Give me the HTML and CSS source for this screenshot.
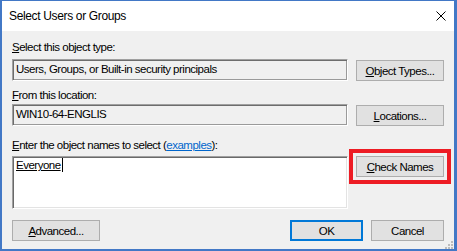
FILE: index.html
```html
<!DOCTYPE html>
<html>
<head>
<meta charset="utf-8">
<link rel="stylesheet" href="styles.css">
</head>
<body>
<div class="window">
  <div class="titlebar">
    <span class="title">Select Users or Groups</span>
    <svg class="close" width="10" height="10" viewBox="0 0 10 10"><path d="M0.5 0.5 L9.5 9.5 M9.5 0.5 L0.5 9.5" stroke="#000" stroke-width="1" fill="none"/></svg>
  </div>
  <div class="content">
    <div class="label"><u>S</u>elect this object type:</div>
    <div class="row row-type">
      <div class="field">Users, Groups, or Built-in security principals</div>
      <div class="btn btn-side"><u>O</u>bject Types...</div>
    </div>
    <div class="label label-loc"><u>F</u>rom this location:</div>
    <div class="row row-loc">
      <div class="field">WIN10-64-ENGLIS</div>
      <div class="btn btn-side"><u>L</u>ocations...</div>
    </div>
    <div class="label label-names"><u>E</u>nter the object names to select (<span class="link">examples</span>):</div>
    <div class="row row-names">
      <div class="textarea"><span class="name">Everyone</span></div>
      <div class="check-wrap">
        <div class="btn btn-check"><u>C</u>heck Names</div>
        <div class="highlight"></div>
      </div>
    </div>
    <div class="footer">
      <div class="btn btn-adv"><u>A</u>dvanced...</div>
      <div class="spacer"></div>
      <div class="btn btn-ok">OK</div>
      <div class="btn btn-cancel">Cancel</div>
    </div>
  </div>
  <svg class="grip" width="8" height="8" viewBox="0 0 8 8">
    <rect x="6" y="0" width="2" height="2" fill="#bcbcbc"/>
    <rect x="3" y="3" width="2" height="2" fill="#bcbcbc"/>
    <rect x="6" y="3" width="2" height="2" fill="#bcbcbc"/>
    <rect x="0" y="6" width="2" height="2" fill="#bcbcbc"/>
    <rect x="3" y="6" width="2" height="2" fill="#bcbcbc"/>
    <rect x="6" y="6" width="2" height="2" fill="#bcbcbc"/>
  </svg>
</div>
</body>
</html>
```

FILE: styles.css
```css
* { box-sizing: border-box; }
html, body { margin: 0; padding: 0; }
body {
  width: 457px;
  height: 251px;
  overflow: hidden;
  font-family: "Liberation Sans", Arial, sans-serif;
  font-size: 11.5px;
  letter-spacing: -0.5px;
  color: #000;
}
.window {
  position: relative;
  width: 457px;
  height: 251px;
  border-style: solid;
  border-color: #4278c6;
  border-width: 1px 3px 2px 2px;
  background: #f0f0f0;
  display: flex;
  flex-direction: column;
}
.titlebar {
  height: 30px;
  background: #fff;
  display: flex;
  align-items: center;
  justify-content: space-between;
  padding: 0 8px 0 7px;
  flex: none;
}
.title {
  line-height: 30px;
  font-size: 12px;
  letter-spacing: -0.35px;
}
.close { display: block; }
.content {
  padding: 9px 10px 0 10px;
  display: flex;
  flex-direction: column;
}
.label {
  height: 15px;
  line-height: 15px;
  white-space: nowrap;
}
.label-loc { margin-top: 7px; }
.label-names { margin-top: 12px; }
.link {
  color: #0066cc;
  text-decoration: underline;
}
.row {
  display: flex;
  gap: 8px;
  align-items: flex-start;
}
.row-type { margin-top: 4px; }
.row-loc { margin-top: 1px; }
.row-names { margin-top: 3px; }
.field {
  width: 336px;
  height: 22px;
  border-style: solid;
  border-width: 1px;
  border-color: #a0a0a0 #ffffff #ffffff #a0a0a0;
  box-shadow: inset 1px 1px 0 #6d6d6d, inset -1px -1px 0 #9a9a9a;
  padding: 1px 3px;
  line-height: 16px;
  white-space: nowrap;
  background: #f0f0f0;
}
.textarea {
  width: 336px;
  height: 53px;
  border-style: solid;
  border-width: 1px;
  border-color: #a0a0a0 #ffffff #ffffff #a0a0a0;
  box-shadow: inset 1px 1px 0 #696969, inset -1px -1px 0 #e3e3e3;
  background: #fff;
  padding: 1px 3px;
  line-height: 15px;
}
.name {
  text-decoration: underline;
  border-right: 1px solid #000;
  padding-right: 1px;
  display: inline-block;
  line-height: 14px;
}
.btn {
  height: 21px;
  background: #e1e1e1;
  border: 1px solid #adadad;
  display: flex;
  align-items: center;
  justify-content: center;
  white-space: nowrap;
  flex: none;
}
.btn-side { width: 88px; margin-top: 1px; }
.check-wrap { position: relative; }
.btn-check { width: 88px; }
.highlight {
  position: absolute;
  left: -7px;
  top: -7px;
  width: 102px;
  height: 35px;
  border: 4px solid #ed1c24;
}
.footer {
  margin-top: 11px;
  display: flex;
  gap: 8px;
}
.spacer { flex: 1; }
.btn-adv { width: 88px; }
.btn-ok { width: 73px; border: 2px solid #0078d7; }
.btn-cancel { width: 73px; }
.grip {
  position: absolute;
  right: 1px;
  bottom: 0;
  display: block;
}
```
